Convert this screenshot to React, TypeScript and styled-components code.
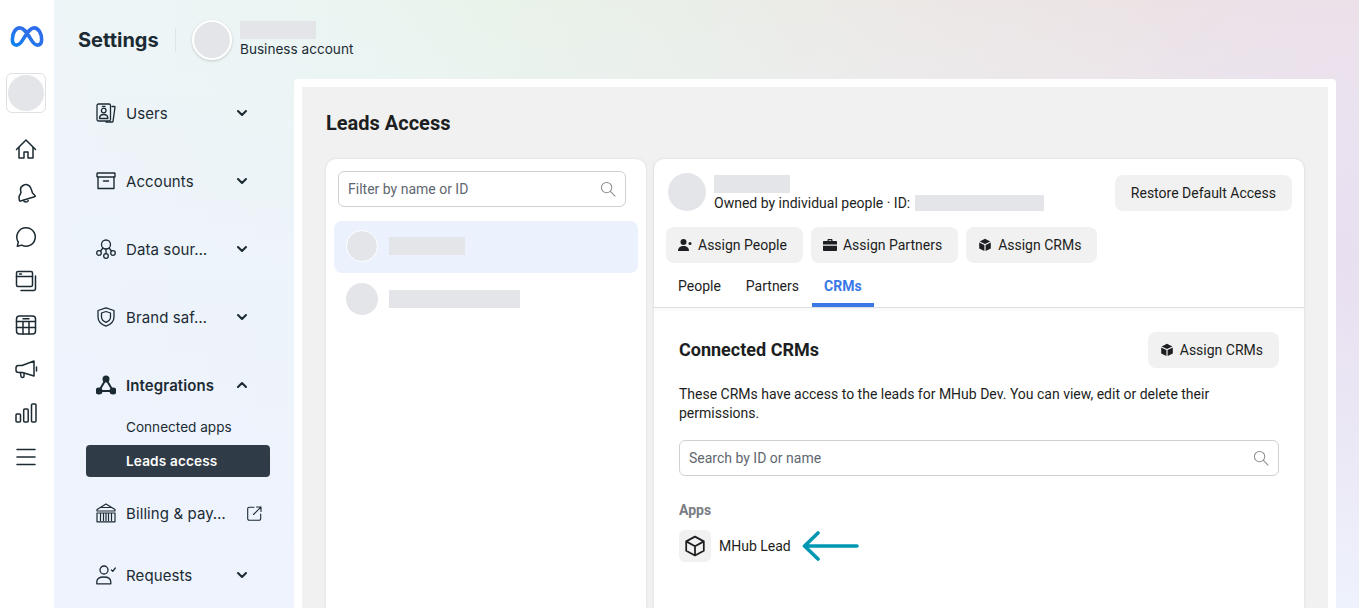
import React from "react";
import styled, { createGlobalStyle } from "styled-components";

const Global = createGlobalStyle`
  html, body { margin: 0; padding: 0; height: 608px; overflow: hidden; background: #fff; }
  * { box-sizing: border-box; }
  #root { height: 608px; }
`;

const Page = styled.div`
  display: grid;
  grid-template-columns: 54px 1fr;
  width: 1359px;
  height: 608px;
  overflow: hidden;
  font-family: Inter, "Liberation Sans", sans-serif;
  color: #1c2b33;
`;

const Rail = styled.aside`
  display: flex;
  flex-direction: column;
  align-items: center;
  background: #fff;
  padding: 24px 2px 0 0;
`;

const LogoSlot = styled.div`
  height: 24px;
  display: flex;
  align-items: center;
  padding-left: 2px;
`;

const AccountBox = styled.div`
  width: 40px;
  height: 40px;
  margin: 25px 0 14px;
  border: 1px solid #dfe1e6;
  border-radius: 6px;
  background: #fff;
  display: flex;
  align-items: center;
  justify-content: center;
`;

const Blob = styled.div<{ $size: number; $ring?: boolean }>`
  width: ${(p) => p.$size}px;
  height: ${(p) => p.$size}px;
  flex: none;
  border-radius: 50%;
  background: #e4e5e9;
  ${(p) => (p.$ring ? "border: 1px solid #fff;" : "")}
`;

const RailIcon = styled.div`
  width: 44px;
  height: 44px;
  flex: none;
  display: flex;
  align-items: center;
  justify-content: center;
`;

const Shell = styled.div`
  display: grid;
  grid-template-columns: 240px 1042px;
  grid-template-rows: 79px 1fr;
  min-height: 0;
  background:
    radial-gradient(300px 360px at 100% 42%, #e8dff0 0%, rgba(232, 223, 240, 0) 100%),
    linear-gradient(180deg, rgba(238, 243, 253, 0) 0, rgba(238, 243, 253, 0.75) 45%, #eef3fd 100%),
    linear-gradient(90deg, #eef5f8 0, #eaf5f1 24%, #e9f3ea 34%, #eaeee8 50%, #ece8e6 66%, #ece2e5 86%, #eee1e7 100%);
`;

const Header = styled.header`
  grid-column: 1 / 3;
  display: flex;
  align-items: center;
  padding-left: 24px;
`;

const Title = styled.h1`
  margin: 0;
  font-size: 20px;
  line-height: 24px;
  font-weight: 700;
  width: 97px;
`;

const HeadDivider = styled.div`
  width: 1px;
  height: 24px;
  background: #dfe5e6;
  margin-right: 16px;
`;

const HeadAvatar = styled.div`
  width: 40px;
  height: 40px;
  border-radius: 50%;
  background: #e4e5e9;
  border: 2px solid #fff;
  box-shadow: 0 1px 3px rgba(0, 0, 0, 0.18);
  margin-right: 8px;
`;

const HeadInfo = styled.div`
  display: flex;
  flex-direction: column;
  gap: 1px;
  font-size: 13.6px;
  line-height: 18px;
`;

const Redact = styled.div<{ $w: number; $h?: number }>`
  width: ${(p) => p.$w}px;
  height: ${(p) => p.$h ?? 18}px;
  flex: none;
  background: #e4e5e9;
`;

const Nav = styled.nav`
  padding-left: 32px;
  display: flex;
  flex-direction: column;
  width: 216px;
`;

const NavRow = styled.div<{ $h?: number; $pr?: number; $mt?: number }>`
  height: ${(p) => p.$h ?? 68}px;
  margin-top: ${(p) => p.$mt ?? 0}px;
  padding: 0 ${(p) => p.$pr ?? 21}px 0 10px;
  display: flex;
  align-items: center;
  justify-content: space-between;
  font-size: 15px;
  flex: none;
`;

const NavMain = styled.span`
  display: flex;
  align-items: center;
  gap: 10px;
`;

const NavIcon = styled.span`
  width: 20px;
  height: 20px;
  flex: none;
  display: flex;
`;

const NavLabel = styled.span<{ $bold?: boolean }>`
  white-space: nowrap;
  font-weight: ${(p) => (p.$bold ? 600 : 400)};
  letter-spacing: 0.1px;
`;

const SubList = styled.div`
  display: flex;
  flex-direction: column;
  gap: 2px;
  margin-top: -8px;
`;

const SubItem = styled.div<{ $active?: boolean }>`
  height: 32px;
  padding-left: 40px;
  display: flex;
  align-items: center;
  font-size: 13.6px;
  border-radius: 4px;
  font-weight: ${(p) => (p.$active ? 600 : 400)};
  letter-spacing: ${(p) => (p.$active ? "0.15px" : "0")};
  color: ${(p) => (p.$active ? "#fff" : "#1c2b33")};
  background: ${(p) => (p.$active ? "#2f3b46" : "transparent")};
`;

const Main = styled.main`
  background: #fff;
  border-radius: 4px 4px 0 0;
  padding: 8px 8px 0;
  min-height: 0;
  display: flex;
`;

const Inner = styled.div`
  flex: 1;
  background: #f1f1f1;
  padding: 0 24px;
  display: flex;
  flex-direction: column;
  font-family: Roboto, "Liberation Sans", sans-serif;
  color: #1c1e21;
  min-width: 0;
`;

const PageTitle = styled.h2`
  margin: 0;
  height: 72px;
  display: flex;
  align-items: center;
  font-size: 20px;
  font-weight: 700;
`;

const Columns = styled.div`
  flex: 1;
  display: grid;
  grid-template-columns: 320px 650px;
  gap: 8px;
  min-height: 0;
`;

const Card = styled.section`
  background: #fff;
  border-radius: 10px 10px 0 0;
  box-shadow: 0 0 3px rgba(0, 0, 0, 0.1);
  min-height: 0;
`;

const ListCard = styled(Card)`
  padding: 12px 8px 0;
`;

const SearchBox = styled.div`
  height: 36px;
  border: 1px solid #cfd1d5;
  border-radius: 6px;
  display: flex;
  align-items: center;
  justify-content: space-between;
  padding: 0 9px;
  font-size: 14px;
  color: #606770;
`;

const FilterBox = styled(SearchBox)`
  margin: 0 12px 0 4px;
`;

const PersonRow = styled.div<{ $active?: boolean }>`
  height: 52px;
  padding: 0 0 ${(p) => (p.$active ? 3 : 0)}px 12px;
  display: flex;
  align-items: center;
  gap: 11px;
  border-radius: 8px;
  background: ${(p) => (p.$active ? "#ebf1fd" : "transparent")};
`;

const PersonList = styled.div`
  margin-top: 14px;
  display: flex;
  flex-direction: column;
`;

const DetailTop = styled.div`
  padding: 14px 12px 0 12px;
  border-bottom: 1px solid #dddfe2;
  box-shadow: 0 2px 3px rgba(0, 0, 0, 0.03);
`;

const OwnerRow = styled.div`
  display: flex;
  justify-content: space-between;
  align-items: flex-start;
  padding-left: 2px;
`;

const Owner = styled.div`
  display: flex;
  gap: 8px;
`;

const OwnerInfo = styled.div`
  display: flex;
  flex-direction: column;
  padding-top: 2px;
  gap: 2px;
`;

const OwnerLine = styled.div`
  display: flex;
  align-items: center;
  gap: 5px;
  font-size: 14px;
  height: 16px;
`;

const Button = styled.button`
  height: 36px;
  border: 0;
  border-radius: 8px;
  background: #f1f1f1;
  display: inline-flex;
  align-items: center;
  gap: 6px;
  padding: 0 16px 0 12px;
  font-family: inherit;
  font-size: 14px;
  color: #1c1e21;
`;

const RestoreButton = styled(Button)`
  padding: 0 16px;
  margin-top: 2px;
`;

const ActionRow = styled.div`
  display: flex;
  gap: 8px;
  margin-top: 16px;
`;

const Tabs = styled.div`
  display: flex;
  gap: 1px;
  margin-top: 4px;
  height: 40px;
`;

const Tab = styled.div<{ $active?: boolean }>`
  padding: 2px 12px 0;
  height: 40px;
  display: flex;
  align-items: center;
  font-size: 14px;
  font-weight: ${(p) => (p.$active ? 700 : 400)};
  color: ${(p) => (p.$active ? "#3b78e7" : "#1c1e21")};
  border-bottom: 4px solid ${(p) => (p.$active ? "#3b78e7" : "transparent")};
`;

const Section = styled.div`
  padding: 24px 25px 0;
`;

const SectionHead = styled.div`
  display: flex;
  justify-content: space-between;
  align-items: center;
`;

const SectionTitle = styled.h3`
  margin: 0;
  padding-bottom: 2px;
  font-size: 18px;
  font-weight: 700;
`;

const Description = styled.p`
  margin: 17px 0 17px;
  font-size: 14px;
  line-height: 19px;
`;

const AppsLabel = styled.div`
  margin-top: 26px;
  font-size: 14px;
  font-weight: 700;
  line-height: 16px;
  color: #7a7d82;
`;

const AppRow = styled.div`
  display: flex;
  align-items: center;
  margin-top: 12px;
  font-size: 14px;
`;

const AppTile = styled.div`
  width: 32px;
  height: 32px;
  border-radius: 6px;
  background: #f1f1f1;
  display: flex;
  align-items: center;
  justify-content: center;
  margin-right: 8px;
`;

const Arrow = styled.svg`
  margin-left: 11px;
`;

type IP = { d: React.ReactNode };
const RailGlyph = ({ d }: IP) => (
  <svg width="24" height="24" viewBox="0 0 24 24" fill="none" stroke="#1c2b33" strokeWidth={1.5} strokeLinecap="round" strokeLinejoin="round">
    {d}
  </svg>
);

const MetaLogo = () => (
  <svg width="34" height="23" viewBox="0 0 36 24" preserveAspectRatio="none" fill="none">
    <defs>
      <linearGradient id="mg" x1="0" y1="1" x2="1" y2="0">
        <stop offset="0" stopColor="#0a82f2" />
        <stop offset="0.6" stopColor="#2f6fe8" />
        <stop offset="1" stopColor="#2a6cf0" />
      </linearGradient>
    </defs>
    <path d="M2.500 15C2.500 8 6 3 10.500 3 14.500 3 17.500 7.500 21.500 14 24.500 19 26.500 21 29 21 31.800 21 33.500 19 33.500 15.500 33.500 8.500 30 3 25.500 3 21.500 3 18.500 7.500 14.500 14 11.500 19 9.500 21 7 21 4.200 21 2.500 19 2.500 15Z" stroke="url(#mg)" strokeWidth="3.800" strokeLinejoin="round" />
  </svg>
);

const Chevron = ({ up }: { up?: boolean }) => (
  <svg width="14" height="14" viewBox="0 0 14 14" fill="none" stroke="#1c2b33" strokeWidth="2.100" strokeLinecap="round" strokeLinejoin="round" style={{ flex: "none" }}>
    <path d={up ? "M3 9l4-4 4 4" : "M3 5l4 4 4-4"} />
  </svg>
);

const Search = () => (
  <svg width="16" height="16" viewBox="0 0 17 17" fill="none" stroke="#8a8d91" strokeWidth="1.100" strokeLinecap="round">
    <circle cx="7" cy="7" r="5.500" />
    <path d="M11 11l5 5" />
  </svg>
);

const CubeSolid = () => (
  <svg width="14" height="14" viewBox="0 0 14 14" fill="#1c1e21">
    <path d="M7 .8l5.300 2.600L7 6 1.700 3.400zM1.200 4.500l5.200 2.600v6L1.200 10.500zM12.800 4.500v6l-5.200 2.600v-6z" />
  </svg>
);

const PersonPlus = () => (
  <svg width="14" height="14" viewBox="0 0 14 14" fill="#1c1e21">
    <circle cx="5.500" cy="4" r="3" />
    <path d="M0 13c0-3.200 2.200-5 5.500-5s5.500 1.800 5.500 5z" />
    <circle cx="12" cy="5.500" r="1.500" />
  </svg>
);

const Briefcase = () => (
  <svg width="14" height="14" viewBox="0 0 14 14" fill="#1c1e21">
    <path d="M4.500 3V2c0-.6.400-1 1-1h3c.6 0 1 .4 1 1v1H13c.6 0 1 .4 1 1v2.500H0V4c0-.6.400-1 1-1zm1.200 0h2.600V2.200H5.700zM0 7.800h14V12c0 .6-.4 1-1 1H1c-.6 0-1-.4-1-1z" />
  </svg>
);

const railIcons: React.ReactNode[] = [
  <><path d="M2.500 12.500L12 3l9.500 9.500" /><path d="M5 10.500V21h5v-6h4v6h5V10.500" /></>,
  <><path d="M9 4.500c3.500-2 7-.5 8 3l1.500 4.500 2.500 2.500c.4.600.2 1-.4 1.300L6.500 20c-.7.200-1.100-.1-1.200-.8l-.3-3.500 2-4-.5-3c-.1-1.700.8-3.300 2.500-4.200z" /><path d="M9.500 19.500c.8 2 3.800 2 4.800.1" /></>,
  <path d="M12 2.800a9.200 9.200 0 1 1-4.300 17.300L3.300 21.300l1-4.300A9.200 9.200 0 0 1 12 2.800z" />,
  <><rect x="2.500" y="2.500" width="16" height="15" rx="1.500" /><path d="M2.500 7.500h16M5.500 5h2" /><path d="M21.500 7v12.500a2 2 0 0 1-2 2H7" /></>,
  <><rect x="2.500" y="3" width="19" height="18" rx="3" /><path d="M2.500 8.500h19M2.500 14.500h19M9 8.500V21M15 8.500V21M9 5.800h6" /></>,
  <><path d="M20 4v15L8.500 15.500H4.500c-1.500 0-2.500-1-2.500-2.500v-2c0-1.500 1-2.500 2.500-2.500H8z" /><path d="M6.500 15.500l.5 4c.1 1.300 3 1.300 3-.2v-3M22.500 10v4" /></>,
  <><rect x="2" y="13" width="4.500" height="8" rx="1" /><rect x="9.700" y="8" width="4.500" height="13" rx="1" /><rect x="17.500" y="3" width="4.500" height="18" rx="1" /></>,
  <path d="M3 4.500h18M3 12h18M3 19.500h18" />,
];

const I20 = ({ children, sw = 1.300 }: { children: React.ReactNode; sw?: number }) => (
  <svg width="20" height="20" viewBox="0 0 20 20" fill="none" stroke="#1c2b33" strokeWidth={sw} strokeLinecap="round" strokeLinejoin="round">
    {children}
  </svg>
);

const UsersIcon = () => (
  <I20>
    <rect x="1" y="1" width="13.500" height="17" rx="1.500" />
    <circle cx="7.700" cy="7.500" r="2.300" />
    <path d="M3.500 15.500c0-2.800 2-4 4.200-4s4.200 1.200 4.200 4zM6.300 3.300h2.800M16 3.500h2.500c.4 0 .6.300.5.700L17 18.300c-.1.500-.4.700-.8.700H10" />
  </I20>
);
const AccountsIcon = () => (
  <I20 sw={1.400}>
    <rect x="1" y="2" width="18" height="4" rx=".6" />
    <path d="M2 6v11.500h16V6M7.500 10h5" />
  </I20>
);
const DataIcon = () => (
  <I20>
    <circle cx="10" cy="5.500" r="4.500" />
    <circle cx="3" cy="14" r="2.300" />
    <circle cx="10" cy="17" r="2.300" />
    <circle cx="17" cy="14" r="2.300" />
    <path d="M7 9L4.500 12M13 9l2.500 3M10 10v4.700" />
  </I20>
);
const ShieldIcon = () => (
  <I20>
    <path d="M10 .8l8 2.700v6.500c0 4.500-3.500 7.500-8 9.200-4.500-1.700-8-4.700-8-9.200V3.500z" />
    <path d="M10 4.500l4.500 1.500v4c0 2.500-2 4.300-4.500 5.400-2.500-1.100-4.500-2.900-4.500-5.400V6z" />
  </I20>
);
const IntegrationIcon = () => (
  <svg width="20" height="20" viewBox="0 0 20 20" fill="#1c2b33" stroke="#1c2b33" strokeWidth="2">
    <circle cx="10" cy="4" r="2.500" />
    <circle cx="3" cy="16" r="2.500" />
    <circle cx="17" cy="16" r="2.500" />
    <path d="M10 4L3 16h14z" fill="none" />
  </svg>
);
const BankIcon = () => (
  <I20 sw={1.200}>
    <path d="M10 1L1 6.500v1.500h18V6.500z" />
    <path d="M5 4.500h10M1.500 10h17M1 18.800h18V10M1 10v8.800M4.500 10.500v7M7.500 10.500v7M10 10.500v7M12.500 10.500v7M15.500 10.500v7" />
  </I20>
);
const RequestsIcon = () => (
  <I20>
    <circle cx="8" cy="5" r="4" />
    <path d="M.8 18.800v-1.800c0-3 2.700-5 7-5s7 2 7 5v1.800zM15.500 5l1.300 1.300L19.300 3" />
  </I20>
);
const ExternalIcon = () => (
  <svg width="15" height="15" viewBox="0 0 15 15" fill="none" stroke="#1c2b33" strokeWidth="1.100" strokeLinecap="round" strokeLinejoin="round" style={{ flex: "none" }}>
    <path d="M7 1.200H2.200a1.500 1.500 0 0 0-1.500 1.500v10a1.500 1.500 0 0 0 1.500 1.500h10a1.500 1.500 0 0 0 1.500-1.500V8M6.500 8.500L14 1M9.500 1H14v4.500" />
  </svg>
);

export default function App() {
  return (
    <Page>
      <Global />
      <Rail>
        <LogoSlot><MetaLogo /></LogoSlot>
        <AccountBox><Blob $size={36} /></AccountBox>
        {railIcons.map((d, i) => (
          <RailIcon key={i}><RailGlyph d={d} /></RailIcon>
        ))}
      </Rail>
      <Shell>
        <Header>
          <Title>Settings</Title>
          <HeadDivider />
          <HeadAvatar />
          <HeadInfo>
            <Redact $w={76} />
            <span>Business account</span>
          </HeadInfo>
        </Header>
        <Nav>
          <NavRow><NavMain><NavIcon><UsersIcon /></NavIcon><NavLabel>Users</NavLabel></NavMain><Chevron /></NavRow>
          <NavRow><NavMain><NavIcon><AccountsIcon /></NavIcon><NavLabel>Accounts</NavLabel></NavMain><Chevron /></NavRow>
          <NavRow><NavMain><NavIcon><DataIcon /></NavIcon><NavLabel>Data sour…</NavLabel></NavMain><Chevron /></NavRow>
          <NavRow><NavMain><NavIcon><ShieldIcon /></NavIcon><NavLabel>Brand saf…</NavLabel></NavMain><Chevron /></NavRow>
          <NavRow><NavMain><NavIcon><IntegrationIcon /></NavIcon><NavLabel $bold>Integrations</NavLabel></NavMain><Chevron up /></NavRow>
          <SubList>
            <SubItem>Connected apps</SubItem>
            <SubItem $active>Leads access</SubItem>
          </SubList>
          <NavRow $h={62} $mt={5} $pr={8}><NavMain><NavIcon><BankIcon /></NavIcon><NavLabel>Billing &amp; pay…</NavLabel></NavMain><ExternalIcon /></NavRow>
          <NavRow $h={62}><NavMain><NavIcon><RequestsIcon /></NavIcon><NavLabel>Requests</NavLabel></NavMain><Chevron /></NavRow>
        </Nav>
        <Main>
          <Inner>
            <PageTitle>Leads Access</PageTitle>
            <Columns>
              <ListCard>
                <FilterBox>
                  <span>Filter by name or ID</span>
                  <Search />
                </FilterBox>
                <PersonList>
                  <PersonRow $active><Blob $size={32} $ring /><Redact $w={76} /></PersonRow>
                  <PersonRow><Blob $size={32} /><Redact $w={131} /></PersonRow>
                </PersonList>
              </ListCard>
              <Card>
                <DetailTop>
                  <OwnerRow>
                    <Owner>
                      <Blob $size={38} />
                      <OwnerInfo>
                        <Redact $w={76} />
                        <OwnerLine>
                          <span>Owned by individual people · ID:</span>
                          <Redact $w={129} $h={16} />
                        </OwnerLine>
                      </OwnerInfo>
                    </Owner>
                    <RestoreButton>Restore Default Access</RestoreButton>
                  </OwnerRow>
                  <ActionRow>
                    <Button><PersonPlus /> Assign People</Button>
                    <Button><Briefcase /> Assign Partners</Button>
                    <Button><CubeSolid /> Assign CRMs</Button>
                  </ActionRow>
                  <Tabs>
                    <Tab>People</Tab>
                    <Tab>Partners</Tab>
                    <Tab $active>CRMs</Tab>
                  </Tabs>
                </DetailTop>
                <Section>
                  <SectionHead>
                    <SectionTitle>Connected CRMs</SectionTitle>
                    <Button><CubeSolid /> Assign CRMs</Button>
                  </SectionHead>
                  <Description>
                    These CRMs have access to the leads for MHub Dev. You can view, edit or delete their permissions.
                  </Description>
                  <SearchBox>
                    <span>Search by ID or name</span>
                    <Search />
                  </SearchBox>
                  <AppsLabel>Apps</AppsLabel>
                  <AppRow>
                    <AppTile>
                      <svg width="22" height="22" viewBox="0 0 20 20" fill="none" stroke="#1c1e21" strokeWidth="1.600" strokeLinejoin="round">
                        <path d="M10 1.500l8 4.300v8.500l-8 4.300-8-4.300V5.800zM2 5.800l8 4.400 8-4.400M10 10.200v8.400" />
                      </svg>
                    </AppTile>
                    MHub Lead
                    <Arrow width="57" height="32" viewBox="0 0 57 32" fill="none" stroke="#0097b2" strokeWidth="3.600" strokeLinecap="round" strokeLinejoin="round">
                      <path d="M2.500 16h52.500M16 3L2.500 16 16 29" />
                    </Arrow>
                  </AppRow>
                </Section>
              </Card>
            </Columns>
          </Inner>
        </Main>
      </Shell>
    </Page>
  );
}
